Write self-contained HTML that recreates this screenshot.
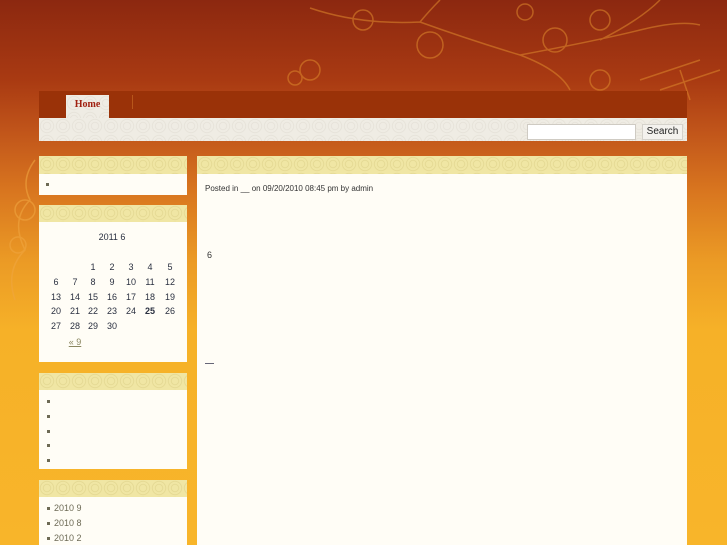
<!DOCTYPE html>
<html><head><meta charset="utf-8"><style>
*{margin:0;padding:0;box-sizing:border-box}
body{width:727px;height:545px;overflow:hidden;position:relative;font-family:"Liberation Sans","Noto Sans CJK SC",sans-serif;
background:linear-gradient(180deg,#8c2810 0px,#a93a12 80px,#c0541a 130px,#d8751f 190px,#eb9a25 260px,#f6b128 330px,#f8b52a 545px)}
.a{position:absolute}
.sw{background-color:#efece4;background-image:radial-gradient(circle at 8px 8px,transparent 3px,#e4e0d7 3.5px,transparent 4.5px,transparent 6px,#e4e0d7 6.5px,transparent 7.5px);background-size:16px 16px}
.hd{background-color:#f0e6a4;background-image:radial-gradient(circle at 8px 8px,transparent 3px,#e2d690 3.5px,transparent 4.5px,transparent 6px,#e2d690 6.5px,transparent 7.5px);background-size:16px 16px}
.bd{background:#fffdf6}
.t{font-size:9px;color:#333}
.cal span{position:absolute;font-size:9px;color:#2a3040;transform:translateX(-50%)}
.bul{position:absolute;width:3px;height:3px;background:#6d6a55}
.li{position:absolute;font-size:9px;color:#6d6a55}
</style></head><body>
<svg class="a" style="left:0;top:0" width="727" height="150" fill="none" stroke="#d9822a" stroke-width="1.5" opacity=".6">
<path d="M310 8 Q360 25 420 22 Q470 40 520 55 M420 22 Q430 10 440 0 M520 55 Q560 70 570 90 M520 55 Q600 40 640 30 M600 40 Q640 20 660 0 M640 30 Q680 20 700 25"/>
<circle cx="363" cy="20" r="10"/><circle cx="430" cy="45" r="13"/><circle cx="555" cy="40" r="12"/><circle cx="600" cy="80" r="10"/><circle cx="310" cy="70" r="10"/><circle cx="295" cy="78" r="7"/><circle cx="600" cy="20" r="10"/><circle cx="525" cy="12" r="8"/>
<path d="M640 80 L700 60 M660 90 L720 70 M680 70 L690 100"/>
</svg>
<svg class="a" style="left:0;top:150" width="40" height="160" fill="none" stroke="#f0a640" stroke-width="1.5" opacity=".6">
<path d="M35 10 Q20 30 30 50 Q10 70 25 100 Q5 120 15 150"/><circle cx="25" cy="60" r="10"/><circle cx="18" cy="95" r="8"/>
</svg>
<div class="a" style="left:39px;top:91px;width:648px;height:27px;background:#9a3208"></div>
<div class="a" style="left:132px;top:95px;width:1px;height:14px;background:#b8561a"></div>
<div class="a sw" style="left:66px;top:95px;width:43px;height:23px;font-family:'Liberation Serif',serif;font-weight:bold;font-size:10px;color:#a02010;text-align:center;line-height:19px">Home</div>
<div class="a sw" style="left:39px;top:118px;width:648px;height:23px"></div>
<div class="a" style="left:527px;top:124px;width:109px;height:16px;background:#fff;border:1px solid #cfcbc3"></div>
<div class="a" style="left:642px;top:124px;width:41px;height:16px;background:#f4f2ee;border:1px solid #d5d2cb;font-size:10px;color:#222;text-align:center;line-height:14px">Search</div>

<div class="a hd" style="left:39px;top:156px;width:148px;height:18px"></div>
<div class="a bd" style="left:39px;top:174px;width:148px;height:21px"></div>
<div class="bul" style="left:46px;top:183px"></div>

<div class="a hd" style="left:39px;top:205px;width:148px;height:17px"></div>
<div class="a bd cal" style="left:39px;top:222px;width:148px;height:140px">
<span style="left:73px;top:10px">2011 6</span>
<span style="left:54px;top:40px">1</span><span style="left:73px;top:40px">2</span><span style="left:92px;top:40px">3</span><span style="left:111px;top:40px">4</span><span style="left:131px;top:40px">5</span>
<span style="left:17px;top:55px">6</span><span style="left:36px;top:55px">7</span><span style="left:54px;top:55px">8</span><span style="left:73px;top:55px">9</span><span style="left:92px;top:55px">10</span><span style="left:111px;top:55px">11</span><span style="left:131px;top:55px">12</span>
<span style="left:17px;top:70px">13</span><span style="left:36px;top:70px">14</span><span style="left:54px;top:70px">15</span><span style="left:73px;top:70px">16</span><span style="left:92px;top:70px">17</span><span style="left:111px;top:70px">18</span><span style="left:131px;top:70px">19</span>
<span style="left:17px;top:84px">20</span><span style="left:36px;top:84px">21</span><span style="left:54px;top:84px">22</span><span style="left:73px;top:84px">23</span><span style="left:92px;top:84px">24</span><span style="left:111px;top:84px;font-weight:bold">25</span><span style="left:131px;top:84px">26</span>
<span style="left:17px;top:99px">27</span><span style="left:36px;top:99px">28</span><span style="left:54px;top:99px">29</span><span style="left:73px;top:99px">30</span>
<span style="left:36px;top:115px;color:#8a8660;text-decoration:underline">« 9</span>
</div>

<div class="a hd" style="left:39px;top:373px;width:148px;height:17px"></div>
<div class="a bd" style="left:39px;top:390px;width:148px;height:79px"></div>
<div class="bul" style="left:47px;top:400px"></div><div class="bul" style="left:47px;top:415px"></div><div class="bul" style="left:47px;top:430px"></div><div class="bul" style="left:47px;top:444px"></div><div class="bul" style="left:47px;top:459px"></div>

<div class="a hd" style="left:39px;top:480px;width:148px;height:17px"></div>
<div class="a bd" style="left:39px;top:497px;width:148px;height:48px"></div>
<div class="bul" style="left:47px;top:507px"></div><div class="li" style="left:54px;top:503px">2010 9</div>
<div class="bul" style="left:47px;top:522px"></div><div class="li" style="left:54px;top:518px">2010 8</div>
<div class="bul" style="left:47px;top:537px"></div><div class="li" style="left:54px;top:533px">2010 2</div>

<div class="a hd" style="left:197px;top:156px;width:490px;height:18px"></div>
<div class="a bd" style="left:197px;top:174px;width:490px;height:371px"></div>
<div class="a" style="left:205px;top:184px;font-size:8px;color:#333">Posted in __ on 09/20/2010 08:45 pm by admin</div>
<div class="a t" style="left:207px;top:250px">6</div>
<div class="a" style="left:205px;top:363px;width:9px;height:1px;background:#667"></div>
</body></html>
